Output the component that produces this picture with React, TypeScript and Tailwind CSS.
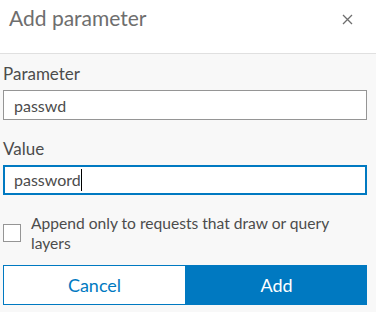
export default function App() {
  return (
    <div className="w-[376px] h-[312px] bg-[#f8f8f8] overflow-hidden" style={{ fontFamily: "Lato, 'Noto Sans', sans-serif" }}>
      <div className="h-[54px] bg-white border-b border-[#e0e0e0] flex items-start justify-between">
        <h1 className="pl-[9px] pt-[5px] text-[21px] leading-[26px] text-[#6e6e6e]">Add parameter</h1>
        <button className="mr-[23px] mt-[13px] w-[12px] h-[12px] flex items-center justify-center text-[#6e6e6e]">
          <svg width="11" height="11" viewBox="0 0 11 11" fill="none" stroke="currentColor" strokeWidth="1.3">
            <path d="M1 1L10 10M10 1L1 10" />
          </svg>
        </button>
      </div>

      <div className="pl-[3px] pr-[9px] pt-[10px] flex flex-col">
        <label className="text-[17px] leading-[20px] text-[#4c4c4c]">Parameter</label>
        <input
          readOnly
          value="passwd"
          className="mt-[6px] h-[30px] w-full border border-[#959595] bg-white px-[10px] text-[16px] text-[#4c4c4c] outline-none"
        />

        <label className="mt-[19px] text-[17px] leading-[20px] text-[#4c4c4c]">Value</label>
        <div className="mt-[6px] h-[30px] w-full border-2 border-[#0079c1] bg-white pl-[9px] flex items-center text-[16px] text-[#4c4c4c]">
          <span>password</span>
          <span className="w-px h-[22px] bg-black" />
        </div>

        <label className="mt-[18px] flex items-center gap-[10px]">
          <span className="w-[18px] h-[18px] shrink-0 border border-[#959595] bg-white" />
          <span className="text-[15.6px] leading-[20px] text-[#4c4c4c]">
            Append only to requests that draw or query layers
          </span>
        </label>

        <div className="mt-[12px] flex h-[40px]">
          <button className="flex-1 border border-[#0079c1] bg-white text-[18px] text-[#0079c1]">Cancel</button>
          <button className="flex-1 bg-[#0079c1] text-[18px] text-white">Add</button>
        </div>
      </div>
    </div>
  );
}
